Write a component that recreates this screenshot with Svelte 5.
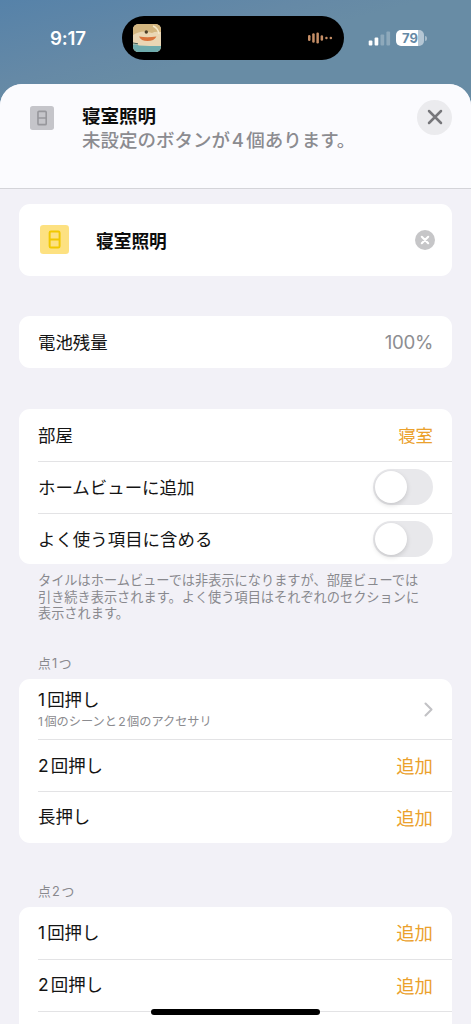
<script>
  const sections = [
    {
      title: '点1つ',
      rows: [
        { label: '1回押し', detail: '1個のシーンと2個のアクセサリ' },
        { label: '2回押し' },
        { label: '長押し' }
      ]
    },
    {
      title: '点2つ',
      rows: [{ label: '1回押し' }, { label: '2回押し' }, {}]
    }
  ];
  const toggles = ['ホームビューに追加', 'よく使う項目に含める'];
  const signal = [5, 8, 11, 14];
  const wave = [
    [0, 6], [4.2, 9.5], [8.4, 11], [12.6, 5.5], [17.2, 2.4], [21.6, 2.4]
  ];
  const parts = (text) => text.split(/(\d)/).filter(Boolean);
</script>

{#snippet mixed(text)}
  {#each parts(text) as p}{#if /\d/.test(p)}<span class="digit">{p}</span>{:else}{p}{/if}{/each}
{/snippet}

{#snippet switchIcon(size)}
  <svg width={size} height={size} viewBox="0 0 28 28" fill="none">
    <rect width="28" height="28" rx="3.2" fill="var(--tile)" />
    <g stroke="var(--glyph)" stroke-width="1.9">
      <rect x="9.300" y="6.200" width="9.600" height="15.600" rx="1.200" />
      <path d="M9.300 14h9.600" />
    </g>
  </svg>
{/snippet}

<div class="screen">
  <div class="status">
    <div class="time">9:17</div>
    <div class="island">
      <svg class="art" width="28" height="28" viewBox="0 0 28 28">
        <defs>
          <clipPath id="art"><rect width="28" height="28" rx="5.5" /></clipPath>
        </defs>
        <g clip-path="url(#art)">
          <rect width="28" height="28" fill="#ead6b4" />
          <path d="M0 0h28v8Q22 7 19 9Q9 5 0 11Z" fill="#d3b57f" />
          <path d="M20 2Q25 4 26 10" stroke="#f6e9ca" stroke-width="1.400" fill="none" />
          <path d="M6 12.500Q14 14 23.500 12.500Q21 17 14.500 17Q8 17 6 12.500Z" fill="#d9733c" />
          <circle cx="13.300" cy="8" r="1.700" fill="#4c3d27" />
          <path d="M0 20.500Q3 19.500 6 21.500Q16 22 28 22V28H0Z" fill="#6fabac" />
          <path d="M0 19l5 .8" stroke="#425c56" stroke-width="1" />
        </g>
      </svg>
      <svg width="26" height="12" viewBox="0 0 26 12">
        {#each wave as [x, h]}
          <rect x={x} y={6 - h / 2} width="2.500" height={h} rx="1.200" fill="#c58e66" />
        {/each}
      </svg>
    </div>
    <div class="indicators">
      <svg width="23" height="15" viewBox="0 0 23 15">
        {#each signal as h, i}
          <rect x={0.700 + i * 5.900} y={14.500 - h} width="3.700" height={h} rx="1" fill="#fff" opacity={i < 2 ? 1 : 0.250} />
        {/each}
      </svg>
      <div class="battery">79</div>
      <div class="cap"></div>
    </div>
  </div>

  <main class="sheet">
    <header>
      <div class="device">{@render switchIcon(24)}</div>
      <div class="heading">
        <h1>寝室照明</h1>
        <p>未設定のボタンが{@render mixed('4個あります。')}</p>
      </div>
      <button class="close" aria-label="閉じる">
        <svg width="16" height="16" viewBox="0 0 16 16" fill="none" stroke="#77777b" stroke-width="2.500" stroke-linecap="round">
          <path d="M2 2l12 12M14 2L2 14" />
        </svg>
      </button>
    </header>

    <div class="content">
      <div class="card name">
        <div class="bulb">{@render switchIcon(29)}</div>
        <strong>寝室照明</strong>
        <svg width="20" height="20" viewBox="0 0 20 20">
          <circle cx="10" cy="10" r="10" fill="#c6c6c8" />
          <path d="M6.800 6.800l6.400 6.400M13.200 6.800l-6.400 6.400" stroke="#fff" stroke-width="2.100" stroke-linecap="round" />
        </svg>
      </div>

      <div class="card charge">
        <div class="row"><span class="text">電池残量</span><span class="text percent">100%</span></div>
      </div>

      <div class="card room">
        <div class="row"><span class="text">部屋</span><span class="text place">寝室</span></div>
        {#each toggles as label}
          <div class="row"><span class="text">{label}</span><span class="toggle"><i></i></span></div>
        {/each}
      </div>
      <p class="note">タイルはホームビューでは非表示になりますが、部屋ビューでは<br />引き続き表示されます。よく使う項目はそれぞれのセクションに<br />表示されます。</p>

      {#each sections as section}
        <h2>{@render mixed(section.title)}</h2>
        <div class="card">
          {#each section.rows as row}
            <div class="row" class:tall={row.detail}>
              {#if row.label}
                <div class="label">
                  <div>{@render mixed(row.label)}</div>
                  {#if row.detail}<small>{@render mixed(row.detail)}</small>{/if}
                </div>
                {#if row.detail}
                  <svg class="chevron" width="9" height="15" viewBox="0 0 9 15" fill="none" stroke="#c2c2c5" stroke-width="2.100" stroke-linecap="round" stroke-linejoin="round">
                    <path d="M1.500 1.500l6 6-6 6" />
                  </svg>
                {:else}
                  <span class="add">追加</span>
                {/if}
              {/if}
            </div>
          {/each}
        </div>
      {/each}
    </div>
  </main>
  <div class="home"></div>
</div>

<style>
  * {
    box-sizing: border-box;
  }
  .screen {
    position: relative;
    display: flex;
    flex-direction: column;
    width: 471px;
    height: 1024px;
    overflow: hidden;
    background: linear-gradient(165deg, #5682a9 0, #6589a6 80px, #688ca5 110px);
    font-family: Inter, 'Noto Sans CJK JP', sans-serif;
    color: #141414;
  }
  .status {
    display: flex;
    flex: none;
    height: 84px;
    padding-top: 16px;
    align-items: flex-start;
  }
  .time {
    width: 122px;
    padding-left: 50px;
    font-size: 18.700px;
    font-weight: 600;
    line-height: 45px;
    letter-spacing: -0.200px;
    color: #fff;
  }
  .island {
    display: flex;
    align-items: center;
    justify-content: space-between;
    width: 222px;
    height: 43.500px;
    padding: 0 10px 0 10.500px;
    border-radius: 22px;
    background: #000;
  }
  .indicators {
    display: flex;
    align-items: center;
    height: 44px;
    padding-left: 24px;
  }
  .battery {
    width: 28px;
    height: 16px;
    margin-left: 5px;
    border-radius: 5px;
    background: linear-gradient(90deg, #fff 79%, #b4c6d4 79%);
    font-size: 13px;
    font-weight: 700;
    line-height: 16px;
    text-align: center;
    color: #6589a6;
  }
  .cap {
    width: 2px;
    height: 5px;
    margin-left: 1px;
    border-radius: 0 2px 2px 0;
    background: #a7bccb;
  }
  .sheet {
    flex: 1;
    min-height: 0;
    overflow: hidden;
    border-radius: 22px 22px 0 0;
    background: #f2f1f7;
  }
  header {
    display: flex;
    height: 105px;
    border-bottom: 1px solid #d4d4d9;
    background: #fbfbfe;
  }
  .device {
    --tile: #c5c5ca;
    --glyph: #97979c;
    width: 82px;
    padding: 22px 0 0 29.500px;
  }
  .heading {
    flex: 1;
    padding-top: 19.500px;
  }
  h1,
  h2,
  p {
    margin: 0;
  }
  h1 {
    font-size: 18.500px;
    font-weight: 700;
    line-height: 24px;
    color: #0c0c0c;
  }
  .heading p {
    font-size: 18.500px;
    font-weight: 500;
    line-height: 24px;
    color: #8b8b90;
    white-space: nowrap;
  }
  .close {
    display: grid;
    place-items: center;
    width: 35px;
    height: 35px;
    margin: 15.500px 19px 0 0;
    padding: 0;
    border: 0;
    border-radius: 50%;
    background: #ebebee;
  }
  .content {
    padding: 14.500px 19px 0 19px;
  }
  .card {
    border-radius: 11px;
    background: #fff;
  }
  .name {
    display: flex;
    align-items: center;
    height: 72px;
    padding: 0 17.500px 0 21px;
  }
  .bulb {
    --tile: #fde181;
    --glyph: #f1c800;
    display: flex;
    width: 56px;
  }
  strong {
    flex: 1;
    font-size: 17.700px;
    font-weight: 700;
    color: #0c0c0c;
  }
  .charge {
    margin-top: 40.700px;
  }
  .room {
    margin-top: 41px;
  }
  .row {
    display: flex;
    align-items: center;
    justify-content: space-between;
    height: 51.800px;
    margin-left: 19px;
    padding-right: 19px;
    font-size: 17.450px;
    line-height: 26px;
  }
  .row + .row {
    border-top: 1px solid #e3e3e5;
  }
  .row.tall {
    height: 60.300px;
  }
  .text {
    padding-top: 2px;
  }
  .percent {
    font-size: 18.700px;
    color: #8d8d91;
    letter-spacing: -0.300px;
  }
  .place {
    color: #eba12c;
  }
  .add {
    padding-top: 1px;
    font-size: 18.400px;
    color: #eba12c;
  }
  .chevron {
    margin-top: 1px;
  }
  .toggle {
    width: 60px;
    height: 36px;
    padding: 2px;
    border-radius: 18px;
    background: #e8e8eb;
  }
  .toggle i {
    display: block;
    width: 32px;
    height: 32px;
    border-radius: 50%;
    background: #fff;
    box-shadow: 0 2px 5px rgba(0, 0, 0, 0.150);
  }
  .note {
    padding: 8px 0 0 19px;
    font-size: 13.200px;
    line-height: 16.500px;
    color: #89898e;
    white-space: nowrap;
  }
  h2 {
    height: 57px;
    padding: 33px 0 0 19px;
    font-size: 12.800px;
    font-weight: 400;
    line-height: 18px;
    color: #89898e;
  }
  .card + h2 {
    height: 64.200px;
    padding-top: 40.500px;
  }
  .digit {
    margin: 0 0.120em 0 0;
  }
  h2 .digit,
  p .digit,
  small .digit {
    margin-left: 0.100em;
  }
  small .digit:first-child {
    margin-left: 0;
  }
  .label small {
    display: block;
    font-size: 12.200px;
    line-height: 18px;
    color: #8b8b8f;
  }
  .home {
    position: absolute;
    left: 151px;
    bottom: 9px;
    width: 169px;
    height: 6px;
    border-radius: 3px;
    background: #000;
  }
</style>
